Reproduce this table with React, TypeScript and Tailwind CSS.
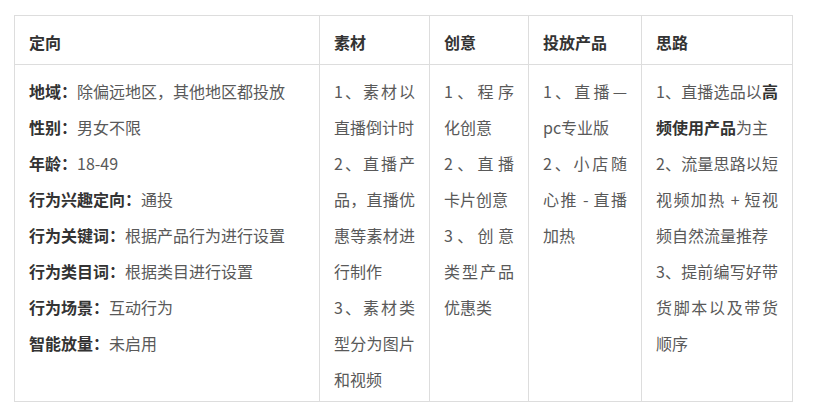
const cell = "border border-[#dddddd] pt-2 pb-1 px-[14px] align-top text-justify";

const targeting: [string, string][] = [
  ["地域：", "除偏远地区，其他地区都投放"],
  ["性别：", "男女不限"],
  ["年龄：", "18-49"],
  ["行为兴趣定向：", "通投"],
  ["行为关键词：", "根据产品行为进行设置"],
  ["行为类目词：", "根据类目进行设置"],
  ["行为场景：", "互动行为"],
  ["智能放量：", "未启用"],
];

export default function App() {
  return (
    <div
      className="min-h-[416px] w-[813px] bg-white pt-[15px] pl-[14px] text-[16px] leading-[36px] text-[#595959]"
      style={{ fontFamily: '"Noto Sans CJK SC", "Noto Sans", sans-serif' }}
    >
      <table className="w-[778px] table-fixed border-collapse">
        <colgroup>
          <col className="w-[305px]" />
          <col className="w-[110px]" />
          <col className="w-[99px]" />
          <col className="w-[113px]" />
          <col className="w-[151px]" />
        </colgroup>
        <thead>
          <tr className="text-left font-bold text-[#333333]">
            <th className={cell}>定向</th>
            <th className={cell}>素材</th>
            <th className={cell}>创意</th>
            <th className={cell}>投放产品</th>
            <th className={cell}>思路</th>
          </tr>
        </thead>
        <tbody>
          <tr>
            <td className={cell}>
              {targeting.map(([label, value]) => (
                <div key={label}>
                  <span className="font-bold text-[#333333]">{label}</span>
                  {value}
                </div>
              ))}
            </td>
            <td className={cell}>
              <div>1、素材以直播倒计时</div>
              <div>2、直播产品，直播优惠等素材进行制作</div>
              <div>3、素材类型分为图片和视频</div>
            </td>
            <td className={cell}>
              <div>1、程序化创意</div>
              <div>2、直播卡片创意</div>
              <div>3、创意类型产品优惠类</div>
            </td>
            <td className={cell}>
              <div>1、直播—pc专业版</div>
              <div>2、小店随心推 - 直播加热</div>
            </td>
            <td className={cell}>
              <div>
                1、直播选品以<span className="font-bold text-[#333333]">高频使用产品</span>为主
              </div>
              <div>2、流量思路以短视频加热 + 短视频自然流量推荐</div>
              <div>3、提前编写好带货脚本以及带货顺序</div>
            </td>
          </tr>
        </tbody>
      </table>
    </div>
  );
}
